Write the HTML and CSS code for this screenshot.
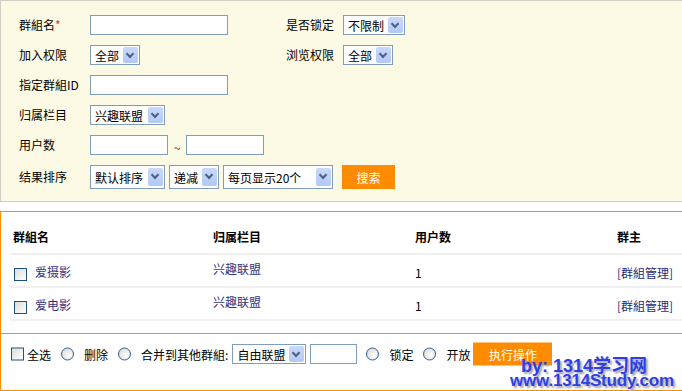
FILE: index.html
```html
<!DOCTYPE html>
<html lang="zh-CN">
  <head>
    <meta charset="UTF-8" />
    <title>群組管理</title>
    <link rel="stylesheet" href="styles.css">
  </head>
  <body>
    <form class="search">
      <div class="row">
        <label class="lbl">群組名<em>*</em></label>
        <div class="field"><span class="text w138"></span></div>
        <label class="lbl-r">是否锁定</label>
        <div class="field"><span class="select w62">不限制<i></i></span></div>
      </div>
      <div class="row">
        <label class="lbl">加入权限</label>
        <div class="field"><span class="select w50">全部<i></i></span></div>
        <label class="lbl-r">浏览权限</label>
        <div class="field"><span class="select w50">全部<i></i></span></div>
      </div>
      <div class="row">
        <label class="lbl">指定群組ID</label>
        <div class="field"><span class="text w138"></span></div>
      </div>
      <div class="row">
        <label class="lbl">归属栏目</label>
        <div class="field"><span class="select w75">兴趣联盟<i></i></span></div>
      </div>
      <div class="row">
        <label class="lbl">用户数</label>
        <div class="field"><span class="text w78"></span><span class="tilde">~</span><span class="text w78"></span></div>
      </div>
      <div class="row last">
        <label class="lbl">结果排序</label>
        <div class="field wide">
          <span class="select tall w75">默认排序<i></i></span>
          <span class="select tall w50">递减<i></i></span>
          <span class="select tall w110">每页显示20个<i></i></span>
          <button type="button" class="btn">搜索</button>
        </div>
      </div>
    </form>

    <div class="box list">
      <table>
        <thead>
          <tr>
            <th class="c1">群組名</th>
            <th class="c2">归属栏目</th>
            <th class="c3">用户数</th>
            <th>群主</th>
          </tr>
        </thead>
        <tbody>
          <tr>
            <td><span class="check"></span><a href="#">爱摄影</a></td>
            <td class="up"><a href="#">兴趣联盟</a></td>
            <td>1</td>
            <td><a href="#" class="manage">[群組管理]</a></td>
          </tr>
          <tr>
            <td><span class="check"></span><a href="#">爱电影</a></td>
            <td class="up"><a href="#">兴趣联盟</a></td>
            <td>1</td>
            <td><a href="#" class="manage">[群組管理]</a></td>
          </tr>
        </tbody>
      </table>
    </div>

    <div class="box actions">
      <span class="check all"></span><span class="opt">全选</span>
      <span class="radio"></span><span class="opt">删除</span>
      <span class="radio"></span><span class="opt merge">合并到其他群組:</span>
      <span class="select w74">自由联盟<i></i></span>
      <span class="text w47"></span>
      <span class="radio"></span><span class="opt">锁定</span>
      <span class="radio"></span><span class="opt">开放</span>
      <button type="button" class="btn run">执行操作</button>
      <div class="mark">
        <div class="mark-1">by: 1314学习网</div>
        <div class="mark-2">www.1314Study.com</div>
      </div>
    </div>
  </body>
</html>
```

FILE: styles.css
```css
* {
  margin: 0;
  padding: 0;
  box-sizing: border-box;
}

body {
  font-family: "Noto Sans CJK SC", "DejaVu Sans", sans-serif;
  font-size: 12px;
  color: #000;
  background: #fff;
  width: 682px;
  overflow: hidden;
}

/* search panel */
.search {
  display: block;
  background: #fcf9e4;
  border: 1px solid #d0cec4;
  border-right: none;
  height: 202px;
  padding: 9px 0 0 18px;
}

.row {
  display: flex;
  align-items: center;
  height: 30px;
}

.row.last {
  height: 34px;
}

.lbl {
  width: 71px;
  padding-bottom: 2px;
}

.lbl em {
  font-style: normal;
  color: #d2401a;
}

.field {
  width: 196px;
  display: flex;
  align-items: center;
}

.field.wide {
  width: auto;
  gap: 4px;
}

.lbl-r {
  width: 57px;
  padding-bottom: 2px;
}

.text,
.select {
  display: inline-flex;
  align-items: center;
  height: 20px;
  background: #fff;
  border: 1px solid #7f9db9;
}

.select {
  justify-content: space-between;
  padding: 0 1px 0 4px;
  font-size: 12px;
}

.select.tall {
  height: 24px;
}

.select i {
  width: 15px;
  height: 16px;
  border-radius: 2px;
  background: linear-gradient(#c9d9fc, #b3c8f5);
  position: relative;
}

.select.tall i {
  height: 18px;
}

.select i::after {
  content: "";
  position: absolute;
  left: 4px;
  top: 4px;
  width: 4px;
  height: 4px;
  border-right: 2px solid #4d6185;
  border-bottom: 2px solid #4d6185;
  transform: rotate(45deg);
}

.w138 { width: 138px; }
.w78 { width: 78px; }
.w47 { width: 47px; }
.w50 { width: 50px; }
.w62 { width: 62px; }
.w74 { width: 74px; }
.w75 { width: 75px; }
.w110 { width: 110px; }

.tilde {
  width: 18px;
  text-align: center;
  color: #336;
  padding-top: 4px;
}

.btn {
  background: #ff8c00;
  color: #fff;
  border: none;
  font-family: inherit;
  font-size: 12px;
  width: 53px;
  height: 24px;
  margin-left: 5px;
}

/* boxes */
.box {
  border: 1px solid #ff8c00;
  border-right: none;
}

.list {
  margin-top: 9px;
  padding: 0 0 12px 9px;
}

table {
  border-collapse: collapse;
  width: 673px;
}

th {
  text-align: left;
  font-weight: bold;
  height: 42px;
  padding: 8px 0 0 3px;
  border-bottom: 2px solid #f0f0f0;
}

.c1 { width: 200px; }
.c2 { width: 202px; }
.c3 { width: 202px; }

td {
  height: 33px;
  padding: 3px 0 0 3px;
  border-bottom: 2px solid #f0f0f0;
}

td.up {
  padding: 0 0 4px 3px;
}

a {
  color: #333380;
  text-decoration: none;
}

.manage {
  color: #2a2a77;
}

.check {
  display: inline-block;
  width: 13px;
  height: 13px;
  border: 1px solid #1c5180;
  background: linear-gradient(135deg, #dcdcd7, #fff);
  vertical-align: middle;
  margin: 0 8px 0 1px;
}

.radio {
  flex: none;
  width: 13px;
  height: 13px;
  border: 1px solid #2f5f8e;
  border-radius: 50%;
  background: radial-gradient(circle at 65% 65%, #fff, #d6d4cc);
  margin-right: 10px;
}

/* action bar */
.actions {
  border-top: none;
  height: 57px;
  padding: 8px 0 0 9px;
  position: relative;
  display: flex;
  align-items: flex-start;
  white-space: nowrap;
}

.actions > span,
.actions > button {
  margin-top: 12px;
  transform: translateY(-50%);
}

.actions .check.all {
  margin: 12px 3px 0 1px;
}

.opt {
  margin-right: 10px;
}

.opt.merge {
  margin-right: 4px;
}

.actions .select {
  margin-right: 4px;
}

.actions .text {
  margin-right: 9px;
}

.btn.run {
  width: 79px;
  height: 23px;
  margin-left: -7px;
}

/* watermark overlay */
.mark {
  position: absolute;
  left: 509px;
  top: 23px;
  font-family: "Liberation Sans", Arial, "Noto Sans CJK SC", sans-serif;
  font-weight: bold;
  color: #2f3fe8;
  text-shadow: 2px 2px 2px #a0a0a8;
  line-height: 18px;
}

.mark-1 {
  font-size: 18px;
  padding-left: 11px;
}

.mark-2 {
  font-size: 17px;
  letter-spacing: -0.2px;
  margin-top: -3px;
}
```
